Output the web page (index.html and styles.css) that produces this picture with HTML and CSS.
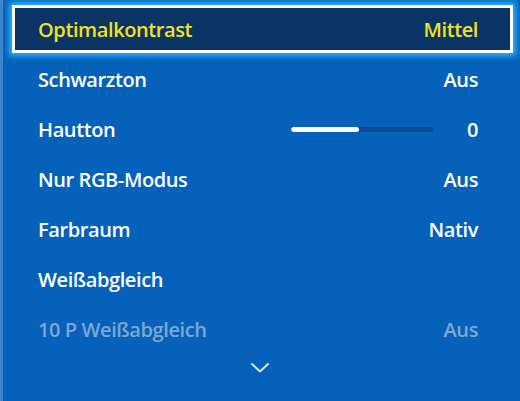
FILE: index.html
```html
<!DOCTYPE html>
<html lang="de">
<head>
    <meta charset="UTF-8">
    <title>Bild-Optionen</title>
    <link rel="stylesheet" href="styles.css">
</head>
<body>

    <!-- Menu panel -->
    <div class="panel">
        <div class="row focused">
            <span class="label">Optimalkontrast</span>
            <span class="value">Mittel</span>
        </div>
        <div class="row">
            <span class="label">Schwarzton</span>
            <span class="value">Aus</span>
        </div>
        <div class="row">
            <span class="label">Hautton</span>
            <div class="slider"><div class="slider-fill" style="width: 48%"></div></div>
            <span class="value">0</span>
        </div>
        <div class="row">
            <span class="label">Nur RGB-Modus</span>
            <span class="value">Aus</span>
        </div>
        <div class="row">
            <span class="label">Farbraum</span>
            <span class="value">Nativ</span>
        </div>
        <div class="row">
            <span class="label">Weißabgleich</span>
        </div>
        <div class="row disabled">
            <span class="label">10 P Weißabgleich</span>
            <span class="value">Aus</span>
        </div>
        <div class="more">
            <svg width="20" height="12" viewBox="0 0 20 12">
                <polyline points="2,2 10,9.5 18,2" fill="none" stroke="#d6e4f5" stroke-width="2" stroke-linecap="round" stroke-linejoin="round"/>
            </svg>
        </div>
    </div>

</body>
</html>
```

FILE: styles.css
```css
body {
    margin: 0;
    padding: 0;
    background-color: #0561b9;
    font-family: 'Open Sans', 'Noto Sans', sans-serif;
    color: white;
}

/* Panel */
.panel {
    width: 520px;
    height: 401px;
    border-left: 3px solid #3c84cb;
    background-color: #0561b9;
    padding-top: 4px;
    box-sizing: border-box;
    overflow: hidden;
}

.row {
    position: relative;
    height: 50px;
    display: flex;
    align-items: center;
    padding: 0 42px 0 35px;
    font-size: 20px;
    font-weight: 600;
    letter-spacing: -0.4px;
}

.label {
    flex: 1;
}

.value {
    text-align: right;
}

/* Focus frame */
.row.focused {
    color: #f4e21c;
    z-index: 1;
}

.row.focused::before {
    content: '';
    position: absolute;
    left: 9px;
    right: 7px;
    top: 1px;
    bottom: 1px;
    background-color: #0a3466;
    border: 3px solid white;
    box-shadow: 0 0 6px 3px #2db4ff;
    z-index: -1;
}

.row.disabled {
    color: #7ea7d2;
}

/* Slider */
.slider {
    width: 142px;
    height: 5px;
    margin-right: 34px;
    background-color: #0d4a90;
    border-radius: 3px;
    overflow: hidden;
}

.slider-fill {
    height: 100%;
    background-color: white;
    border-radius: 3px;
}

.more {
    display: flex;
    justify-content: center;
    padding-top: 8px;
    padding-right: 3px;
}
```
